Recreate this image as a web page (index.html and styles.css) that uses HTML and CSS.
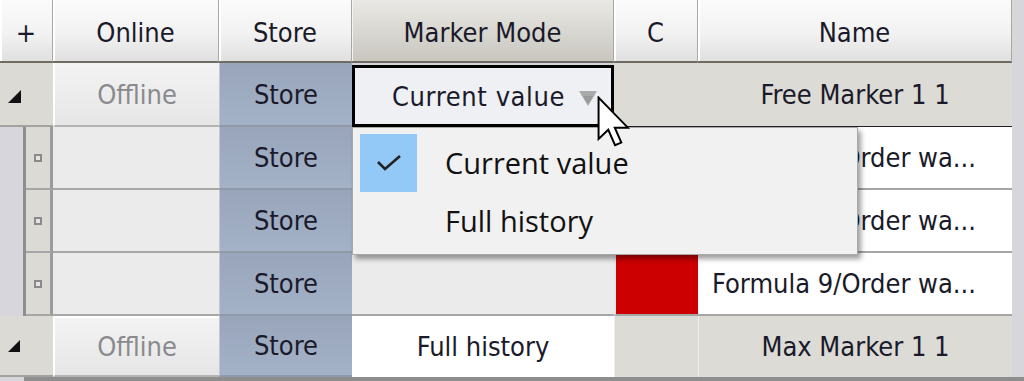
FILE: index.html
```html
<!DOCTYPE html>
<html>
<head>
<meta charset="utf-8">
<link rel="stylesheet" href="styles.css">
</head>
<body>
<div class="grid">
  <div class="row head">
    <div class="hc">+</div>
    <div class="hc">Online</div>
    <div class="hc">Store</div>
    <div class="hc hot">Marker Mode</div>
    <div class="hc">C</div>
    <div class="hc">Name</div>
    <div class="hc side"></div>
  </div>

  <div class="row group first">
    <div class="c lead"><svg class="tri" viewBox="0 0 12 12" width="13" height="13"><polygon points="0,12 12,12 12,0" fill="#111"/></svg></div>
    <div class="c btn">Offline</div>
    <div class="c store">Store</div>
    <div class="c edit"><span class="edit-text">Current value</span><svg class="dd" viewBox="0 0 18 15" width="18" height="15"><polygon points="0,0 18,0 9,15" fill="#a9a9a9"/><polygon points="4,5 14,5 9,13" fill="#9a9a9a"/></svg></div>
    <div class="c gray"></div>
    <div class="c gray gname">Free Marker 1 1</div>
    <div class="c side"></div>
  </div>

  <div class="row child">
    <div class="c lead2"><span class="indent"></span><span class="node"><i></i></span></div>
    <div class="c blank"></div>
    <div class="c store">Store</div>
    <div class="c blank"></div>
    <div class="c color"></div>
    <div class="c name">Formula 9/Order wa...</div>
    <div class="c side"></div>
  </div>
  <div class="row child">
    <div class="c lead2"><span class="indent"></span><span class="node"><i></i></span></div>
    <div class="c blank"></div>
    <div class="c store">Store</div>
    <div class="c blank"></div>
    <div class="c color"></div>
    <div class="c name">Formula 9/Order wa...</div>
    <div class="c side"></div>
  </div>
  <div class="row child">
    <div class="c lead2"><span class="indent"></span><span class="node"><i></i></span></div>
    <div class="c blank"></div>
    <div class="c store">Store</div>
    <div class="c blank"></div>
    <div class="c color"></div>
    <div class="c name">Formula 9/Order wa...</div>
    <div class="c side"></div>
  </div>

  <div class="row group last">
    <div class="c lead"><svg class="tri" viewBox="0 0 12 12" width="12" height="12"><polygon points="0,12 12,12 12,0" fill="#111"/></svg></div>
    <div class="c btn raised">Offline</div>
    <div class="c store">Store</div>
    <div class="c white">Full history</div>
    <div class="c gray"></div>
    <div class="c gray gname">Max Marker 1 1</div>
    <div class="c side"></div>
  </div>
  <div class="foot"><span class="foot-l"></span><span class="foot-r"></span></div>
</div>

<div class="popup">
  <div class="item">
    <span class="check"><svg viewBox="0 0 26 18" width="26" height="18"><polyline points="2,8 9,15 24,2" fill="none" stroke="#222" stroke-width="2.6"/></svg></span>
    <span class="label">Current value</span>
  </div>
  <div class="item">
    <span class="check none"></span>
    <span class="label">Full history</span>
  </div>
</div>

<svg class="cursor" viewBox="0 0 13 19.5" width="34" height="51">
  <path d="M0.6,0.6 L0.6,16.4 L4.3,12.9 L6.9,18.8 L9.3,17.8 L6.8,12.1 L11.8,12.1 Z" fill="#fff" stroke="#000" stroke-width="0.75" stroke-linejoin="miter"/>
</svg>
</body>
</html>
```

FILE: styles.css
```css
html, body {
  margin: 0;
  padding: 0;
}
body {
  width: 1024px;
  height: 381px;
  overflow: hidden;
  position: relative;
  background: #d7d7db;
  font-family: "DejaVu Sans Condensed", "DejaVu Sans", sans-serif;
  font-stretch: condensed;
  font-size: 27px;
  color: #1a1a2a;
}
.grid {
  display: flex;
  flex-direction: column;
}
.row {
  display: grid;
  grid-template-columns: 53px 166px 133px 262px 84px 314px 12px;
}
.head { height: 63px; }
.group.first { height: 64px; }
.child { height: 63px; }
.group.last { height: 61px; }

.hc, .c {
  display: flex;
  align-items: center;
  justify-content: center;
  box-sizing: border-box;
  white-space: nowrap;
  overflow: hidden;
}

/* header */
.hc {
  padding-top: 4px;
  background: linear-gradient(#fbfbfb, #f2f2f2 55%, #e0e0e0);
  border-right: 1px solid #aba89f;
  box-shadow: inset 2px 0 0 #fff;
  border-bottom: 2px solid #6e6b62;
}
.hc.hot {
  background: linear-gradient(#e9e8e4, #d8d6d0 55%, #c8c6bf);
  box-shadow: inset 1px 0 0 #f4f4f2;
}
.hc.side {
  background: #d7d7db;
  border: none;
  box-shadow: none;
}

/* common cells */
.c.side { background: #d7d7db; }
.lead {
  justify-content: flex-start;
  padding-left: 8px;
  background: #dcdad4;
  border-bottom: 2px solid #a4a29c;
}
.group.first .lead { padding-top: 4px; }
.btn {
  background: linear-gradient(#f3f3f3, #e6e6e6);
  color: #8a8a8e;
  border-left: 2px solid #fff;
  border-bottom: 2px solid #b4b4b4;
}
.btn.raised { border-top: 2px solid #fff; }
.store {
  background: linear-gradient(#98a5ba, #a4b2c8);
  border-left: 1px solid #c3c7cf;
  border-bottom: 2px solid #8e99aa;
}
.edit {
  background: #eef0f4;
  border: 3px solid #000;
  margin-top: 2px;
  justify-content: flex-start;
  padding-left: 37px;
  gap: 14px;
}
.edit-text { letter-spacing: 0.6px; }
.dd { margin-top: 4px; }
.gray {
  background: #dcdbd6;
}
.group.first .gray { border-bottom: 1px solid #222; }
.group.last .gray { border-left: 1px solid #eee; }
.white {
  background: #fff;
}

/* child rows */
.lead2 {
  display: flex;
  align-items: stretch;
  justify-content: flex-start;
  padding: 0;
}
.lead2 .indent {
  width: 23px;
  background: #d6d6dc;
  border-right: 3px solid #8e8e8e;
}
.lead2 .node {
  flex: 1;
  display: flex;
  align-items: center;
  justify-content: center;
  background: #dcdad5;
  border-right: 3px solid #9c9c9c;
  border-bottom: 2px solid #a6a6a6;
}
.lead2 .node i {
  display: block;
  width: 4px;
  height: 4px;
  border: 2px solid #8a8a8a;
  background: #e4e4e4;
}
.blank {
  background: #ebebeb;
  border-bottom: 2px solid #a6a6a6;
}
.color {
  background: #cc0000;
  border-left: 2px solid #e6e6e6;
  border-bottom: 2px solid #a6a6a6;
}
.name {
  background: #fff;
  justify-content: flex-start;
  padding-left: 14px;
  border-bottom: 2px solid #a6a6a6;
}

.foot {
  display: flex;
  height: 4px;
}
.foot-l { width: 24px; background: #d6d6dc; }
.foot-r { flex: 1; background: #8e8e8e; }

/* popup menu */
.popup {
  position: absolute;
  left: 352px;
  top: 127px;
  width: 506px;
  height: 128px;
  box-sizing: border-box;
  background: #f1f1f1;
  border: 1px solid #a9a9a9;
  box-shadow: 3px 4px 5px rgba(0, 0, 0, 0.38);
  padding-top: 6px;
  font-family: "Open Sans", "Noto Sans", sans-serif;
  font-stretch: normal;
  font-size: 29px;
  color: #111;
}
.item {
  display: flex;
  align-items: center;
  height: 58px;
}
.check {
  width: 57px;
  height: 58px;
  margin-left: 7px;
  display: flex;
  align-items: center;
  justify-content: center;
  background: #92c9f7;
}
.check.none { background: transparent; }
.label {
  margin-left: 28px;
  line-height: 58px;
}

.cursor {
  position: absolute;
  left: 597px;
  top: 96px;
}
```
